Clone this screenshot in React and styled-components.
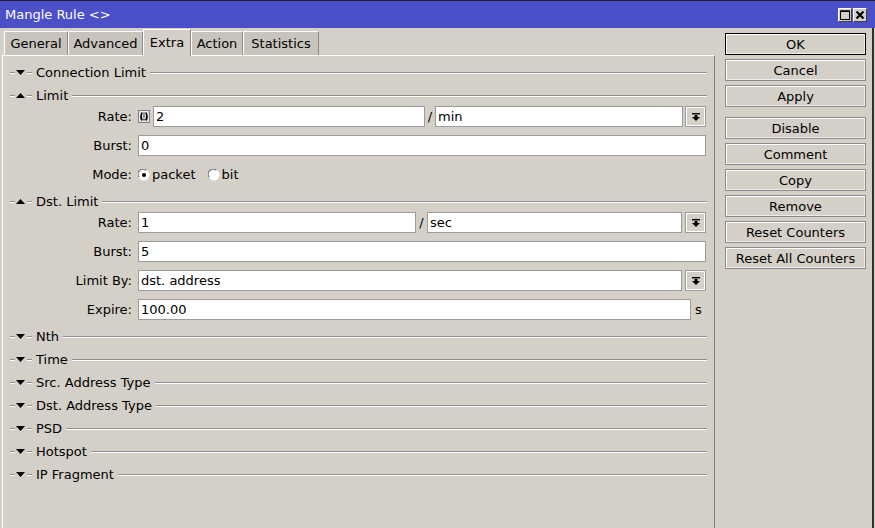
import React from 'react';
import styled, { createGlobalStyle } from 'styled-components';

const Global = createGlobalStyle`
  html, body { margin: 0; padding: 0; width: 875px; height: 528px; overflow: hidden; background: #d4d0c8; }
  body { font-family: "DejaVu Sans", "Liberation Sans", sans-serif; font-size: 13px; color: #000; }
  * { box-sizing: border-box; }
  #root { width: 875px; height: 528px; }
`;

const Window = styled.div`
  width: 875px;
  height: 528px;
  display: flex;
  flex-direction: column;
  background: #d4d0c8;
`;

const TitleBar = styled.div`
  height: 28px;
  flex: none;
  background: #4b4fc8;
  border-top: 1px solid #20203a;
  display: flex;
  align-items: center;
  padding: 0 8px 0 5px;
  color: #fff;
`;

const Title = styled.div`
  flex: 1;
  font-size: 13px;
  line-height: 15px;
`;

const TitleButtons = styled.div`
  display: flex;
  gap: 1px;
`;

const TitleButton = styled.div`
  width: 14px;
  height: 14px;
  background: #d4d0c8;
  border: 1px solid;
  border-color: #fff #404040 #404040 #fff;
  display: flex;
  align-items: center;
  justify-content: center;
`;

const Body = styled.div`
  flex: 1;
  display: flex;
  margin-right: 1px;
  border-right: 2px solid #303030;
  padding-left: 2px;
  min-height: 0;
`;

const Main = styled.div`
  width: 713px;
  display: flex;
  flex-direction: column;
  padding-top: 1px;
`;

const Tabs = styled.div`
  height: 26px;
  display: flex;
  align-items: flex-end;
  padding-left: 2px;
  flex: none;
`;

const Tab = styled.div`
  width: ${p => p.$w}px;
  height: ${p => (p.$active ? 27 : 24)}px;
  margin-bottom: ${p => (p.$active ? -1 : 0)}px;
  position: relative;
  z-index: ${p => (p.$active ? 1 : 0)};
  background: ${p => (p.$active ? '#d4d0c8' : '#c8c4bc')};
  border-left: 1px solid #fff;
  border-top: 1px solid #fff;
  border-right: 1px solid #8a8a8a;
  display: flex;
  align-items: ${p => (p.$active ? 'flex-start' : 'center')};
  padding-top: ${p => (p.$active ? 5 : 0)}px;
  justify-content: center;
  font-size: 13px;
  white-space: nowrap;
`;

const Panel = styled.div`
  flex: 1;
  border-left: 1px solid #fff;
  border-top: 1px solid #fff;
  border-right: 1px solid #808080;
  padding: 5px 7px 0 7px;
  display: flex;
  flex-direction: column;
`;

const Header = styled.div`
  height: 23px;
  display: flex;
  align-items: center;
`;

const Groove = styled.div`
  height: 2px;
  border-top: 1px solid #8e8e8e;
  border-bottom: 1px solid #fff;
  width: ${p => (p.$w ? `${p.$w}px` : 'auto')};
  flex: ${p => (p.$w ? 'none' : '1')};
  margin-left: ${p => p.$ml || 0}px;
`;

const HeaderLabel = styled.span`
  margin-left: 4px;
  white-space: nowrap;
  line-height: 15px;
`;

const Fields = styled.div`
  display: flex;
  flex-direction: column;
  gap: 8px;
  margin-top: -1px;
  padding-bottom: 5px;
  padding-right: 1px;
`;

const Row = styled.div`
  height: 21px;
  display: flex;
  align-items: center;
`;

const Label = styled.div`
  width: 122px;
  margin-right: 6px;
  text-align: right;
  white-space: nowrap;
`;

const Input = styled.input`
  height: 21px;
  border: 1px solid #9c9c9c;
  background: #fff;
  font-family: inherit;
  font-size: 13px;
  color: #000;
  padding: 0 2px;
  margin: 0;
  outline: none;
  border-radius: 0;
  min-width: 0;
  width: ${p => (p.$w ? `${p.$w}px` : 'auto')};
  flex: ${p => (p.$w ? 'none' : '1')};
`;

const Slash = styled.span`
  width: ${p => p.$w || 10}px;
  text-align: center;
  flex: none;
`;

const DropButton = styled.div`
  width: 21px;
  height: 21px;
  flex: none;
  margin-left: ${p => p.$ml || 2}px;
  border: 1px solid #9c9c9c;
  box-shadow: inset 1px 1px 0 #fff, inset -1px -1px 0 #fff;
  background: #d4d0c8;
  display: flex;
  align-items: center;
  justify-content: center;
`;

const Unit = styled.span`
  width: 15px;
  text-align: center;
  flex: none;
`;

const RadioGroup = styled.label`
  display: flex;
  align-items: center;
  margin-right: ${p => p.$mr || 0}px;
`;

const RadioText = styled.span`
  margin-left: 2px;
`;

const Side = styled.div`
  width: 141px;
  margin-left: 10px;
  padding-top: 5px;
  display: flex;
  flex-direction: column;
  gap: 4px;
`;

const Button = styled.div`
  height: 22px;
  flex: none;
  margin-top: ${p => p.$mt || 0}px;
  border: 1px solid ${p => (p.$default ? '#000' : '#8a8a8a')};
  box-shadow: inset 1px 1px 0 #fff, inset -1px -1px 0 #ececec;
  background: #d4d0c8;
  display: flex;
  align-items: center;
  justify-content: center;
  white-space: nowrap;
  font-size: 13px;
`;

const IconBox = styled.div`
  width: 12px;
  height: 13px;
  margin-right: 3px;
  flex: none;
  display: flex;
`;

const Tri = ({ up }) => (
  <svg width="9" height="5" viewBox="0 0 9 5" style={{ margin: '0 0 0 1px', flex: 'none' }}>
    {up ? <polygon points="0,5 9,5 4.5,0" fill="#000" /> : <polygon points="0,0 9,0 4.5,5" fill="#000" />}
  </svg>
);

const DropIcon = () => (
  <svg width="8" height="8" viewBox="0 0 8 8">
    <rect x="0" y="0" width="8" height="1.4" fill="#000" />
    <rect x="2.5" y="2" width="3" height="2" fill="#000" />
    <polygon points="0,4 8,4 4,8" fill="#000" />
  </svg>
);

const Radio = ({ checked }) => (
  <svg width="12" height="12" viewBox="0 0 12 12" style={{ flex: 'none' }}>
    <circle cx="6" cy="6" r="5.5" fill="#fff" />
    <path d="M1.2 8.2 A5 5 0 0 1 8.2 1.2" stroke="#808080" strokeWidth="1.2" fill="none" />
    {checked && <circle cx="6" cy="6" r="2" fill="#000" />}
  </svg>
);

const Section = ({ title, open, children }) => (
  <>
    <Header>
      <Groove $w={5} />
      <Tri up={open} />
      <Groove $w={5} $ml={2} />
      <HeaderLabel>{title}</HeaderLabel>
      <Groove $ml={4} />
    </Header>
    {open && <Fields>{children}</Fields>}
  </>
);

const tabs = [
  ['General', 64],
  ['Advanced', 75],
  ['Extra', 48],
  ['Action', 52],
  ['Statistics', 76],
];

const buttons = ['OK', 'Cancel', 'Apply', 'Disable', 'Comment', 'Copy', 'Remove', 'Reset Counters', 'Reset All Counters'];

export default function App() {
  return (
    <Window>
      <Global />
      <TitleBar>
        <Title>Mangle Rule &lt;&gt;</Title>
        <TitleButtons>
          <TitleButton>
            <svg width="10" height="10" viewBox="0 0 10 10">
              <rect x="0.5" y="1" width="9" height="8.5" fill="none" stroke="#000" strokeWidth="1" />
              <rect x="0.5" y="0.5" width="9" height="1.5" fill="#000" />
            </svg>
          </TitleButton>
          <TitleButton>
            <svg width="10" height="10" viewBox="0 0 10 10">
              <path d="M1.5 1.5 L8.5 8.5 M8.5 1.5 L1.5 8.5" stroke="#000" strokeWidth="2" />
            </svg>
          </TitleButton>
        </TitleButtons>
      </TitleBar>
      <Body>
        <Main>
          <Tabs>
            {tabs.map(([t, w]) => (
              <Tab key={t} $w={w} $active={t === 'Extra'}>{t}</Tab>
            ))}
          </Tabs>
          <Panel>
            <Section title="Connection Limit" />
            <Section title="Limit" open>
              <Row>
                <Label>Rate:</Label>
                <IconBox>
                  <svg width="12" height="13" viewBox="0 0 12 13">
                    <rect x="0.5" y="0.5" width="11" height="12" fill="#e8e8e8" stroke="#808080" />
                    <path d="M4 2.5 Q2 6.5 4 10.5" stroke="#000" strokeWidth="1.6" fill="none" />
                    <path d="M8 2.5 Q10 6.5 8 10.5" stroke="#000" strokeWidth="1.6" fill="none" />
                    <path d="M6 2.5 V8" stroke="#000" strokeWidth="1.4" strokeDasharray="1 1" />
                    <rect x="5.3" y="9" width="1.4" height="1.4" fill="#000" />
                  </svg>
                </IconBox>
                <Input $w={272} defaultValue="2" readOnly />
                <Slash>/</Slash>
                <Input defaultValue="min" readOnly />
                <DropButton $ml={2}><DropIcon /></DropButton>
              </Row>
              <Row>
                <Label>Burst:</Label>
                <Input defaultValue="0" readOnly />
              </Row>
              <Row>
                <Label>Mode:</Label>
                <RadioGroup $mr={12}>
                  <Radio checked />
                  <RadioText>packet</RadioText>
                </RadioGroup>
                <RadioGroup>
                  <Radio />
                  <RadioText>bit</RadioText>
                </RadioGroup>
              </Row>
            </Section>
            <Section title="Dst. Limit" open>
              <Row>
                <Label>Rate:</Label>
                <Input $w={278} defaultValue="1" readOnly />
                <Slash $w={11}>/</Slash>
                <Input defaultValue="sec" readOnly />
                <DropButton $ml={3}><DropIcon /></DropButton>
              </Row>
              <Row>
                <Label>Burst:</Label>
                <Input defaultValue="5" readOnly />
              </Row>
              <Row>
                <Label>Limit By:</Label>
                <Input defaultValue="dst. address" readOnly />
                <DropButton $ml={3}><DropIcon /></DropButton>
              </Row>
              <Row>
                <Label>Expire:</Label>
                <Input defaultValue="100.00" readOnly />
                <Unit>s</Unit>
              </Row>
            </Section>
            <Section title="Nth" />
            <Section title="Time" />
            <Section title="Src. Address Type" />
            <Section title="Dst. Address Type" />
            <Section title="PSD" />
            <Section title="Hotspot" />
            <Section title="IP Fragment" />
          </Panel>
        </Main>
        <Side>
          {buttons.map(b => (
            <Button key={b} $default={b === 'OK'} $mt={b === 'Disable' ? 6 : 0}>{b}</Button>
          ))}
        </Side>
      </Body>
    </Window>
  );
}
